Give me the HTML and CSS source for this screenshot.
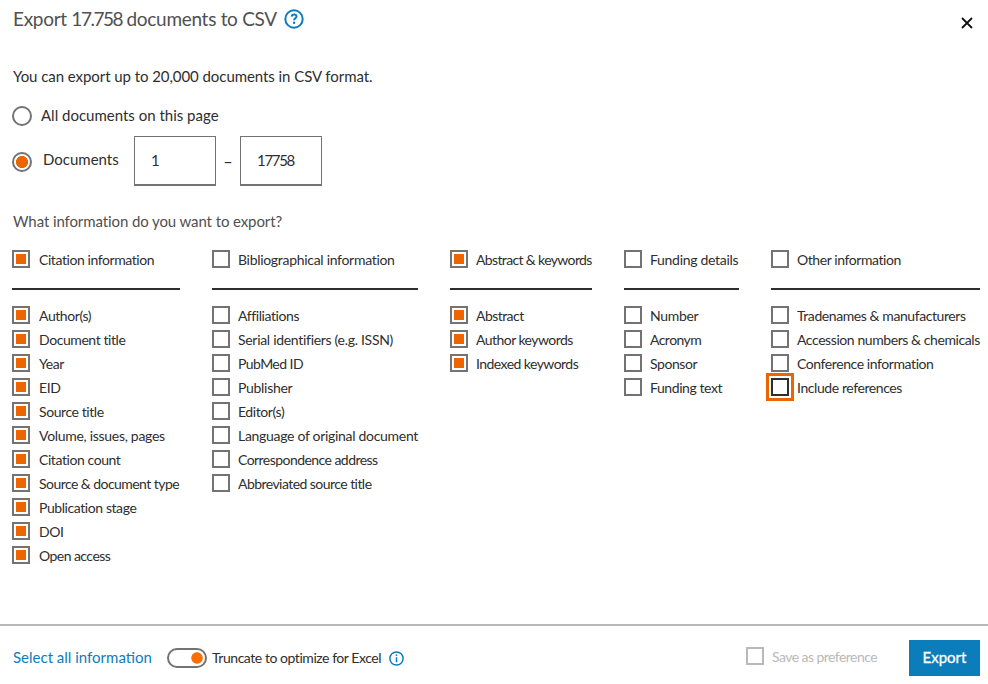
FILE: index.html
```html
<!DOCTYPE html>
<html lang="en">
<head>
<meta charset="utf-8">
<title>Export documents</title>
<link rel="stylesheet" href="styles.css">
</head>
<body>
<main class="dialog">
  <header class="head">
    <h1 class="title">Export <span class="num">17.758</span> documents to CSV</h1>
    <svg class="help" viewBox="0 0 20 20" width="20" height="20"><circle cx="10" cy="10" r="8.7"/><path d="M7.6 7.6C7.8 6.2 8.8 5.5 10.1 5.5c1.4 0 2.4.8 2.4 2 0 1.8-2.4 1.9-2.4 3.8"/><circle class="dot" cx="10.1" cy="13.8" r="1.2"/></svg>
    <svg class="close" viewBox="0 0 12 12" width="12" height="12"><path d="M1 1l10 10M11 1L1 11"/></svg>
  </header>
  <p class="intro">You can export up to 20,000 documents in CSV format.</p>
  <label class="choice"><span class="radio"></span><span class="all">All documents on this page</span></label>
  <div class="range">
    <span class="radio on"></span><span class="docs">Documents</span>
    <span class="field">1</span><span class="dash">–</span><span class="field">17758</span>
  </div>
  <h2 class="question">What information do you want to export?</h2>
  <div class="groups">
    <section class="group citation">
      <div class="check on group-head"><i></i><span>Citation information</span></div>
      <div class="check on"><i></i><span>Author(s)</span></div>
      <div class="check on"><i></i><span>Document title</span></div>
      <div class="check on"><i></i><span>Year</span></div>
      <div class="check on"><i></i><span>EID</span></div>
      <div class="check on"><i></i><span>Source title</span></div>
      <div class="check on loose"><i></i><span>Volume, issues, pages</span></div>
      <div class="check on"><i></i><span>Citation count</span></div>
      <div class="check on tight"><i></i><span>Source &amp; document type</span></div>
      <div class="check on"><i></i><span>Publication stage</span></div>
      <div class="check on"><i></i><span>DOI</span></div>
      <div class="check on tight"><i></i><span>Open access</span></div>
    </section>
    <section class="group">
      <div class="check group-head loose"><i></i><span>Bibliographical information</span></div>
      <div class="check"><i></i><span>Affiliations</span></div>
      <div class="check loose"><i></i><span>Serial identifiers (e.g. ISSN)</span></div>
      <div class="check tight"><i></i><span>PubMed ID</span></div>
      <div class="check loose"><i></i><span>Publisher</span></div>
      <div class="check"><i></i><span>Editor(s)</span></div>
      <div class="check loose"><i></i><span>Language of original document</span></div>
      <div class="check tight"><i></i><span>Correspondence address</span></div>
      <div class="check tight"><i></i><span>Abbreviated source title</span></div>
    </section>
    <section class="group">
      <div class="check on group-head tighter"><i></i><span>Abstract &amp; keywords</span></div>
      <div class="check on tight"><i></i><span>Abstract</span></div>
      <div class="check on tight"><i></i><span>Author keywords</span></div>
      <div class="check on tight"><i></i><span>Indexed keywords</span></div>
    </section>
    <section class="group">
      <div class="check group-head loose"><i></i><span>Funding details</span></div>
      <div class="check loose"><i></i><span>Number</span></div>
      <div class="check tight"><i></i><span>Acronym</span></div>
      <div class="check"><i></i><span>Sponsor</span></div>
      <div class="check"><i></i><span>Funding text</span></div>
    </section>
    <section class="group">
      <div class="check group-head"><i></i><span>Other information</span></div>
      <div class="check"><i></i><span>Tradenames &amp; manufacturers</span></div>
      <div class="check"><i></i><span>Accession numbers &amp; chemicals</span></div>
      <div class="check"><i></i><span>Conference information</span></div>
      <div class="check focus"><i></i><span>Include references</span></div>
    </section>
  </div>
  <footer class="foot">
    <a class="select-all">Select all information</a>
    <span class="toggle"></span>
    <span class="truncate">Truncate to optimize for Excel</span>
    <svg class="info" viewBox="0 0 15 15" width="15" height="15"><circle cx="7.5" cy="7.5" r="6.6"/><path d="M7.5 6.3v5M7.5 3.6v1.5"/></svg>
    <div class="check save tight"><i></i><span>Save as preference</span></div>
    <button class="export">Export</button>
  </footer>
</main>
</body>
</html>
```
FILE: styles.css
```css
* { box-sizing: border-box; }
body { margin: 0; background: #fff; color: #2e2e2e; font-family: Lato, "Noto Sans", sans-serif; }
.dialog { width: 988px; height: 684px; display: flex; flex-direction: column; overflow: hidden; white-space: nowrap; }
.head { display: flex; align-items: center; height: 38px; padding: 0 15px 0 13px; }
.title { margin: 0; width: 264px; font-size: 19px; font-weight: 400; line-height: 38px; color: #505050; letter-spacing: -0.3px; }
.num { letter-spacing: -1.5px; }
.help { margin-left: 7px; fill: none; stroke: #0c7dbb; stroke-width: 2; }
.help .dot { fill: #0c7dbb; stroke: none; }
.close { margin: 7px 0 0 auto; stroke: #111; stroke-width: 1.8; fill: none; }
.intro { margin: 26px 0 0 13px; font-size: 15px; line-height: 24px; letter-spacing: -0.06px; }
.choice { display: flex; align-items: center; height: 20px; margin: 18px 0 0 12px; font-size: 15px; }
.radio { flex: none; width: 20px; height: 20px; border: 2px solid #737373; border-radius: 50%; }
.radio.on { margin-top: 2px; background: radial-gradient(circle, #eb6500 5.7px, #fff 6.4px); }
.all { margin-left: 9px; padding-bottom: 2px; }
.range { display: flex; align-items: center; height: 50px; margin: 10px 0 0 12px; font-size: 15px; }
.docs { width: 91px; margin-left: 11px; line-height: 20px; padding-bottom: 4px; }
.field { width: 82px; height: 50px; padding: 0 16px; line-height: 47px; letter-spacing: -1.3px; border: 1px solid #737373; border-bottom-width: 2px; }
.dash { width: 24px; text-align: center; font-family: "Noto Sans", sans-serif; }
.question { margin: 23px 0 0 13px; font-size: 15px; line-height: 24px; font-weight: 400; color: #505050; letter-spacing: -0.1px; }
.groups { display: grid; grid-template-columns: 168px 206px 142px 115px 209px; gap: 32px; margin: 17px 0 0 12px; }
.check { display: flex; height: 24px; font-size: 14px; line-height: 20px; letter-spacing: -0.42px; }
.check.loose { letter-spacing: -0.3px; }
.check.tight { letter-spacing: -0.55px; }
.check.tighter { letter-spacing: -0.64px; }
.check i { flex: none; width: 18px; height: 18px; border: 2px solid #737373; }
.check span { margin-left: 8px; }
.citation .check span { margin-left: 9px; }
.check.on i { padding: 2px; background: #eb6500 content-box; }
.group-head { height: 40px; margin-bottom: 16px; border-bottom: 2px solid #2e2e2e; }
.check.focus i { border-color: #2e2e2e; outline: 3px solid #eb6500; outline-offset: 2px; }
.foot { display: flex; align-items: center; height: 60px; margin-top: auto; padding: 6px 8px 0 13px; border-top: 2px solid #b9b9b9; }
.select-all { width: 154px; padding-bottom: 2px; font-size: 15px; color: #0c7dbb; }
.toggle { width: 40px; height: 20px; border: 2px solid #737373; border-radius: 10px; background: radial-gradient(circle at 28px 8px, #ff6c00 5.3px, #fff 6.1px); }
.truncate { width: 177px; margin-left: 5px; padding-bottom: 2px; font-size: 14px; letter-spacing: -0.45px; }
.info { fill: none; stroke: #0c7dbb; stroke-width: 1.5; }
.save { height: 18px; margin: -4px 0 0 auto; color: #b9b9b9; }
.save i { border-color: #b9b9b9; }
.export { width: 71px; height: 36px; margin-left: 32px; padding: 0 0 2px; border: 0; background: #0c7dbb; color: #fff; font: 15px Lato, sans-serif; -webkit-text-stroke: 0.3px #fff; }
```
